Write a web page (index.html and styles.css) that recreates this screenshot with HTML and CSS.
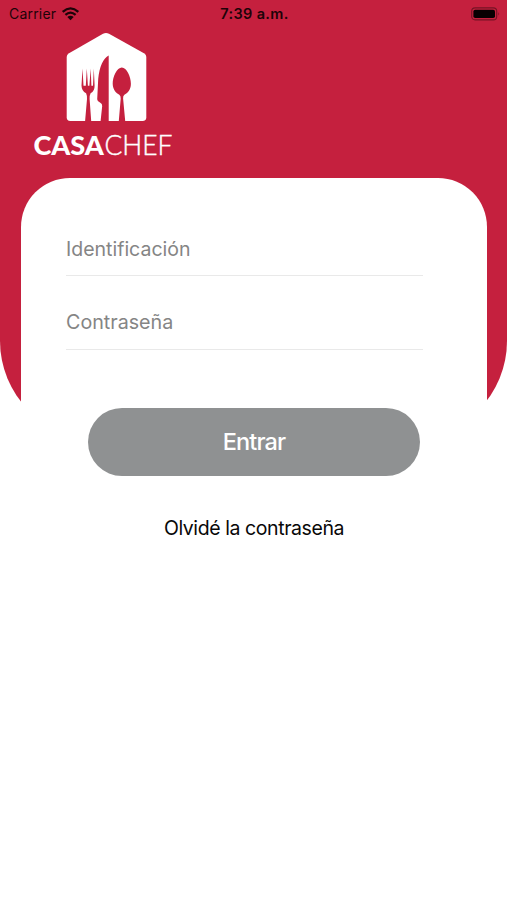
FILE: index.html
```html
<!DOCTYPE html>
<html lang="es">
<head>
<meta charset="utf-8">
<meta name="viewport" content="width=device-width, initial-scale=1">
<title>Casa Chef</title>
<link rel="stylesheet" href="styles.css">
</head>
<body>
<div class="screen">
  <header class="status">
    <div class="status-left">
      <span class="carrier">Carrier</span>
      <svg class="wifi" viewBox="0 0 18 14" width="19" height="14" aria-hidden="true">
        <path d="M1.2 4.8Q9-2 16.8 4.8M3.9 7.8Q9 3.4 14.1 7.8" fill="none" stroke="currentColor" stroke-width="2.3"/>
        <path d="M5.8 9.9Q9 7.5 12.2 9.9L9 13.2Z" fill="currentColor"/>
      </svg>
    </div>
    <span class="clock">7:39 a.m.</span>
    <svg class="battery" viewBox="0 0 30 14" width="30" height="14" aria-hidden="true">
      <rect x="0.7" y="0.9" width="25" height="12" rx="3.4" fill="none" stroke="currentColor" stroke-opacity=".42" stroke-width="1.1"/>
      <rect x="2.4" y="2.7" width="21.6" height="8.4" rx="1.8" fill="currentColor"/>
      <path d="M27.4 5q1.7 1.9 0 3.8z" fill="currentColor" fill-opacity=".4"/>
    </svg>
  </header>
  <svg class="logo" viewBox="0 0 140 128" width="140" height="128" role="img" aria-label="Casachef">
    <path class="paper" d="M35.6 21.4Q33.7 22.7 33.7 25V85.2Q33.7 89 37.3 89H109.6Q113.3 89 113.3 85.2V25Q113.3 22.7 111.4 21.4L76 1.8Q73 .2 70 1.8Z"/>
    <path class="cutlery" d="M49.5 36.4L48.5 53.5Q48.6 59 53.1 61.2Q54.2 63.5 54 67L52.1 89H58.2L56.6 67Q56.4 63.5 57.6 61.2Q61.8 59 61.6 53.5L60.8 36.4L60 53.8H58.4L57.7 36.4L56.4 53.8H54.9L53.8 36.4L52.8 53.8H50.5Z"/>
    <path class="cutlery" d="M75.7 23.5C70.5 25.7 66.3 35 65.2 47L64.2 67.2Q64.2 69.5 67.3 70.8Q69.3 71.9 69.2 74L67.6 89H75.7Z"/>
    <path class="cutlery" d="M88.8 35.4C84 35.4 79.6 44.5 79.7 51.8C79.8 57.8 83.3 61.3 86.3 62.8Q87.8 63.7 87.7 66.5L85.8 89H92.2L90.1 66.5Q89.9 63.7 91.4 62.8C94.5 61.3 97.9 57.8 97.9 51.8C97.9 44.5 93.6 35.4 88.8 35.4Z"/>
    <text class="brand brand-bold" x="0.4" y="122.5" textLength="70.5" lengthAdjust="spacingAndGlyphs">CASA</text>
    <text class="brand brand-light" x="71.5" y="122.5" textLength="68" lengthAdjust="spacingAndGlyphs">CHEF</text>
  </svg>
  <main class="card">
    <form class="form">
      <input class="field" type="text" placeholder="Identificación" aria-label="Identificación">
      <input class="field field-last" type="password" placeholder="Contraseña" aria-label="Contraseña">
      <button class="submit" type="button">Entrar</button>
      <a class="forgot">Olvidé la contraseña</a>
    </form>
  </main>
</div>
</body>
</html>
```
FILE: styles.css
```css
* { box-sizing: border-box; }

body {
  margin: 0;
  background: #fff;
  font-family: Inter, "Liberation Sans", sans-serif;
}

.screen {
  position: relative;
  isolation: isolate;
  display: flex;
  flex-direction: column;
  height: 900px;
  overflow: hidden;
}

.screen::before {
  content: "";
  position: absolute;
  inset: 0 0 auto;
  height: 439px;
  border-radius: 0 0 98px 98px;
  background: #c5203e;
  z-index: -1;
}

.status {
  display: grid;
  grid-template-columns: 1fr auto 1fr;
  align-items: center;
  height: 27px;
  padding: 0 6px 0 9px;
  color: #1d0308;
  font-size: 14px;
}

.status-left { display: flex; align-items: center; gap: 5px; }
.carrier { letter-spacing: 0.2px; }
.clock { margin-left: -1px; font-size: 14.5px; font-weight: 600; letter-spacing: 0.35px; }
.battery { justify-self: end; color: #080002; }

.logo { display: block; margin: 5px 0 0 33px; flex: none; overflow: visible; }
.paper { fill: #fff; }
.cutlery { fill: #c5203e; }
.brand { fill: #fff; font-family: Lato, sans-serif; font-size: 27px; }
.brand-bold { font-weight: 900; }
.brand-light { font-weight: 300; stroke: #fff; stroke-width: 0.4px; }

.card {
  flex: 1;
  margin: 18px 20px 0 21px;
  padding: 45px 45px 0;
  border-radius: 49px 49px 0 0;
  background: #fff;
}

.form { display: flex; flex-direction: column; }

.field {
  width: 357px;
  height: 53px;
  margin: 0 0 21px;
  padding: 0;
  border: 0;
  border-bottom: 1px solid #e9e9e9;
  border-radius: 0;
  outline: 0;
  background: transparent;
  font: 400 19.5px Inter, sans-serif;
}

.field-last { padding-bottom: 2px; font-size: 19.7px; }
.field::placeholder { color: #858585; opacity: 1; }

.submit {
  align-self: flex-start;
  width: 332px;
  height: 68px;
  margin: 37px 0 0 22px;
  padding: 0 0 2px;
  border: 0;
  border-radius: 34px;
  background: #8f9192;
  color: #fff;
  font: 450 23.5px Inter, sans-serif;
  letter-spacing: -0.9px;
}

.forgot {
  margin: 40px 0 0;
  color: #080808;
  font-size: 19.5px;
  line-height: 24px;
  letter-spacing: -0.42px;
  text-align: center;
}
```
